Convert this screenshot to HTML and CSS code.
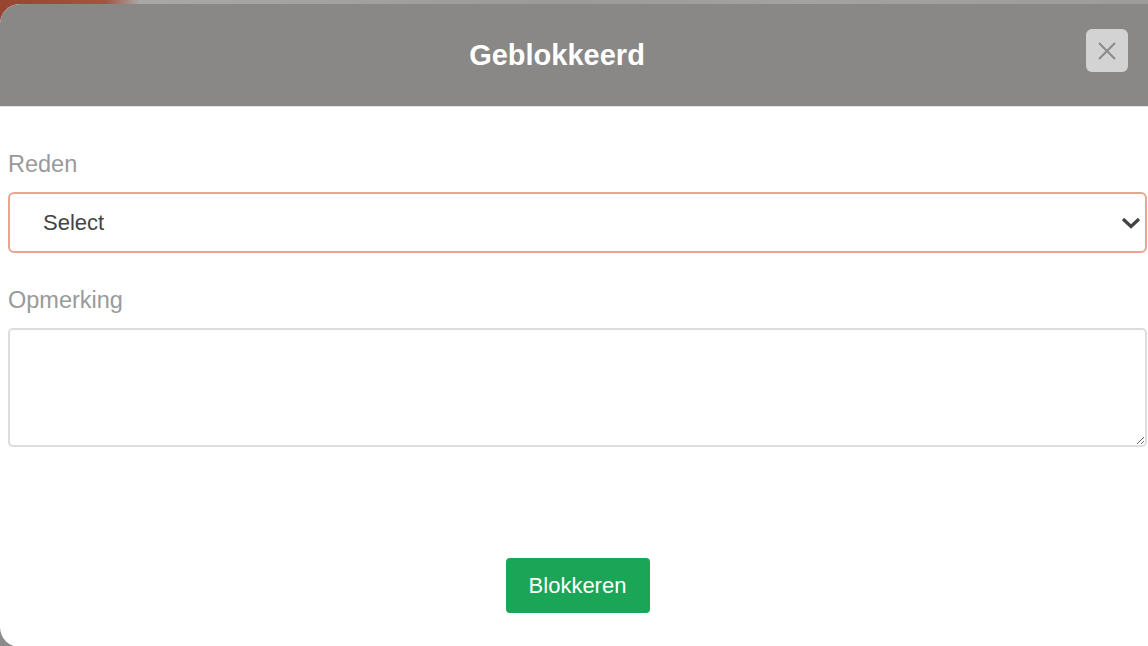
FILE: index.html
```html
<!DOCTYPE html>
<html lang="nl">
<head>
<meta charset="utf-8">
<title>Geblokkeerd</title>
<link rel="stylesheet" href="styles.css">
</head>
<body>
<div class="modal">
  <header class="modal-header">
    <h1 class="modal-title">Geblokkeerd</h1>
    <button class="close-btn" type="button" aria-label="Sluiten">
      <svg width="20" height="20" viewBox="0 0 20 20"><path d="M2 2 L18 18 M18 2 L2 18" stroke="#8a8a8a" stroke-width="2" fill="none"/></svg>
    </button>
  </header>
  <form class="modal-body">
    <label class="field-label" for="reden">Reden</label>
    <div class="select-wrap">
      <select id="reden" class="select">
        <option>Select</option>
      </select>
      <svg class="chevron" width="20" height="12" viewBox="0 0 20 12"><path d="M2 2 L10 9.5 L18 2" stroke="#444" stroke-width="3.2" fill="none" stroke-linecap="butt" stroke-linejoin="miter"/></svg>
    </div>
    <label class="field-label label-second" for="opmerking">Opmerking</label>
    <textarea id="opmerking" class="textarea"></textarea>
    <div class="actions">
      <button type="button" class="btn-primary">Blokkeren</button>
    </div>
  </form>
</div>
</body>
</html>
```

FILE: styles.css
```css
html, body {
  margin: 0;
  padding: 0;
  height: 100%;
  overflow: hidden;
}
body {
  font-family: "Liberation Sans", Arial, Helvetica, sans-serif;
  background:
    linear-gradient(90deg, #974530 0, #a3533e 105px, #a8a8a8 140px, #9a9a9a 560px, #a2a2a2 800px, #9c9c9c 100%) top left / 100% 30px no-repeat,
    #8b8b8b;
  padding-top: 4px;
  box-sizing: border-box;
}
.modal {
  width: 1148px;
  height: 643px;
  background: #fff;
  border-radius: 20px 0 0 20px;
  overflow: hidden;
}
.modal-header {
  height: 102px;
  background: #898886;
  border-bottom: 1px solid #e2e2e2;
  display: flex;
  align-items: center;
}
.modal-title {
  flex: 1;
  margin: 0;
  padding-left: 28px;
  text-align: center;
  color: #fff;
  font-size: 29px;
  font-weight: bold;
  line-height: 34px;
}
.close-btn {
  align-self: flex-start;
  margin: 25px 20px 0 0;
  width: 42px;
  height: 43px;
  border: none;
  border-radius: 6px;
  background: #d3d3d3;
  padding: 0;
  display: flex;
  align-items: center;
  justify-content: center;
}
.modal-body {
  display: flex;
  flex-direction: column;
  padding: 43px 1px 0 8px;
}
.field-label {
  font-size: 23.5px;
  line-height: 28px;
  color: #9a9a9a;
  margin-bottom: 14px;
}
.label-second {
  margin-top: 33px;
}
.select-wrap {
  position: relative;
}
.select {
  -webkit-appearance: none;
  appearance: none;
  width: 100%;
  height: 61px;
  box-sizing: border-box;
  border: 2px solid #eba493;
  border-radius: 6px;
  background: #fff;
  padding: 0 40px 0 33px;
  font-family: "Liberation Sans", Arial, Helvetica, sans-serif;
  font-size: 22px;
  color: #444;
  outline: none;
}
.chevron {
  position: absolute;
  right: 6px;
  top: 25px;
  pointer-events: none;
}
.textarea {
  width: 100%;
  height: 119px;
  box-sizing: border-box;
  border: 2px solid #dddddd;
  border-radius: 5px;
  padding: 8px 12px;
  font-family: "Liberation Sans", Arial, Helvetica, sans-serif;
  font-size: 20px;
  resize: vertical;
  outline: none;
}
.actions {
  display: flex;
  justify-content: center;
  margin-top: 111px;
}
.btn-primary {
  width: 144px;
  height: 55px;
  border: none;
  border-radius: 4px;
  background: #1ba557;
  color: #fff;
  font-family: "Liberation Sans", Arial, Helvetica, sans-serif;
  font-size: 22px;
  padding: 0;
}
```
